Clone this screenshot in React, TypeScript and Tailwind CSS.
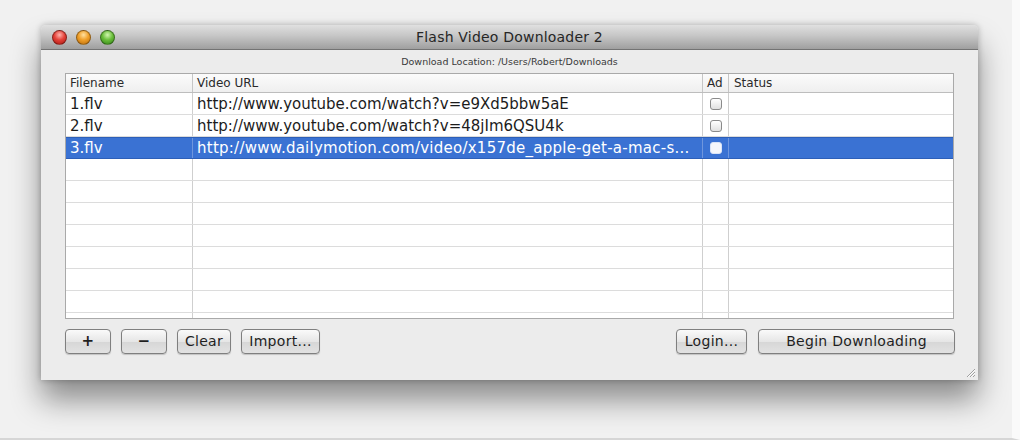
import React from "react";

const rows = [
  { f: "1.flv", u: "http://www.youtube.com/watch?v=e9Xd5bbw5aE", sel: false },
  { f: "2.flv", u: "http://www.youtube.com/watch?v=48jIm6QSU4k", sel: false },
  { f: "3.flv", u: "http://www.dailymotion.com/video/x157de_apple-get-a-mac-s...", sel: true },
];

function Light({ cls }: { cls: string }) {
  return <div className={`w-[15px] h-[15px] rounded-full border border-[rgba(0,0,0,0.35)] ${cls}`} />;
}

function Btn({ children, w }: { children: React.ReactNode; w: string }) {
  return (
    <div
      className={`${w} h-[25px] flex items-center justify-center rounded-[4px] border border-[#7f7f7f] bg-[linear-gradient(#fafafa,#e6e6e6_50%,#d6d6d6_51%,#e2e2e2)] shadow-[0_1px_1px_rgba(0,0,0,0.18)] text-[14px] text-[#1f1f1f] tracking-[0.3px]`}
    >
      {children}
    </div>
  );
}

function Check({ sel }: { sel: boolean }) {
  return (
    <div
      className={`w-[12px] h-[12px] rounded-[3px] border ${
        sel ? "border-[#d8e3f7] bg-[#f4f6fb]" : "border-[#8a8a8a] bg-[linear-gradient(#ffffff,#e0e0e0)]"
      }`}
    />
  );
}

export default function App() {
  const empty = Array.from({ length: 8 });
  return (
    <div
      className="w-[1020px] h-[440px] bg-[#f1f1f1] overflow-hidden border-b-[2px] border-[#d6d6d6] border-r-[8px] border-r-[#fafafa]"
      style={{ fontFamily: '"DejaVu Sans", Verdana, sans-serif' }}
    >
      <div className="pl-[41px] pt-[25px]">
        <div className="w-[937px] h-[355px] flex flex-col bg-[#ececec] shadow-[0_20px_30px_rgba(0,0,0,0.42),0_0_6px_rgba(0,0,0,0.25)] rounded-t-[5px]">
          {/* title bar */}
          <div className="relative h-[25px] flex items-center rounded-t-[5px] bg-[linear-gradient(#e0e0e0,#c6c6c6_45%,#9f9f9f)] border-b border-[#737373]">
            <div className="flex gap-[9px] pl-[11px]">
              <Light cls="bg-[radial-gradient(circle_at_50%_30%,#ffb3ad,#e5433a_45%,#a8160f)]" />
              <Light cls="bg-[radial-gradient(circle_at_50%_30%,#ffe0a0,#f0a02a_45%,#b66a0a)]" />
              <Light cls="bg-[radial-gradient(circle_at_50%_30%,#d2f5b0,#6cc03c_45%,#2f7f14)]" />
            </div>
            <div className="absolute inset-0 flex items-center justify-center text-[14px] text-[#262626] tracking-[0.2px]">
              Flash Video Downloader 2
            </div>
          </div>
          {/* location */}
          <div className="h-[23px] flex items-center justify-center text-[9.5px] text-[#3a3a3a] pt-[1px]">
            Download Location: /Users/Robert/Downloads
          </div>
          {/* table */}
          <div className="mx-[24px] h-[246px] border border-[#a9a9a9] bg-white overflow-hidden flex flex-col text-[#1c1c1c]">
            <div className="h-[19px] shrink-0 flex border-b border-[#bdbdbd] bg-[linear-gradient(#fbfbfb,#efefef)] text-[12px] text-[#2a2a2a]">
              <div className="w-[127px] border-r border-[#c6c6c6] pl-[4px] flex items-center">Filename</div>
              <div className="w-[510px] border-r border-[#c6c6c6] pl-[4px] flex items-center">Video URL</div>
              <div className="w-[26px] border-r border-[#c6c6c6] pl-[4px] flex items-center">Ad</div>
              <div className="flex-1 pl-[5px] flex items-center">Status</div>
            </div>
            {rows.map((r, i) => (
              <div
                key={i}
                className={`h-[22px] shrink-0 flex text-[15px] ${
                  r.sel ? "bg-[#3a72d3] text-white border-y border-[#2d5fb8]" : "border-b border-[#dcdcdc]"
                }`}
              >
                <div className={`w-[127px] border-r ${r.sel ? "border-[#6f96dd]" : "border-[#cfcfcf]"} pl-[4px] pt-[1px] flex items-center`}>
                  {r.f}
                </div>
                <div
                  className={`w-[510px] border-r ${r.sel ? "border-[#6f96dd] tracking-[0.25px]" : "border-[#cfcfcf]"} pl-[4px] pt-[1px] flex items-center whitespace-nowrap overflow-hidden`}
                >
                  {r.u}
                </div>
                <div className={`w-[26px] border-r ${r.sel ? "border-[#6f96dd]" : "border-[#cfcfcf]"} flex items-center justify-center`}>
                  <Check sel={r.sel} />
                </div>
                <div className="flex-1" />
              </div>
            ))}
            {empty.map((_, i) => (
              <div key={i} className="h-[22px] shrink-0 flex border-b border-[#dcdcdc]">
                <div className="w-[127px] border-r border-[#cfcfcf]" />
                <div className="w-[510px] border-r border-[#cfcfcf]" />
                <div className="w-[26px] border-r border-[#cfcfcf]" />
                <div className="flex-1" />
              </div>
            ))}
            <div className="flex-1 flex">
              <div className="w-[127px] border-r border-[#cfcfcf]" />
              <div className="w-[510px] border-r border-[#cfcfcf]" />
              <div className="w-[26px] border-r border-[#cfcfcf]" />
              <div className="flex-1" />
            </div>
          </div>
          {/* buttons */}
          <div className="mt-[10px] ml-[24px] mr-[23px] flex items-center">
            <div className="flex gap-[10px]">
              <Btn w="w-[46px]">
                <span className="font-bold text-[15px]">+</span>
              </Btn>
              <Btn w="w-[46px]">
                <span className="font-bold text-[15px]">−</span>
              </Btn>
              <Btn w="w-[54px]">Clear</Btn>
              <Btn w="w-[79px]">Import...</Btn>
            </div>
            <div className="flex-1" />
            <div className="flex gap-[11px]">
              <Btn w="w-[71px]">Login...</Btn>
              <Btn w="w-[197px]">Begin Downloading</Btn>
            </div>
          </div>
          <div className="flex-1 flex items-end justify-end pr-[2px] pb-[2px]">
            <svg width="12" height="12" viewBox="0 0 12 12">
              <path d="M11 3 L3 11 M11 6 L6 11 M11 9 L9 11" stroke="#a0a0a0" strokeWidth="1" />
              <path d="M11 4 L4 11 M11 7 L7 11" stroke="#ffffff" strokeWidth="0.8" />
            </svg>
          </div>
        </div>
      </div>
    </div>
  );
}
